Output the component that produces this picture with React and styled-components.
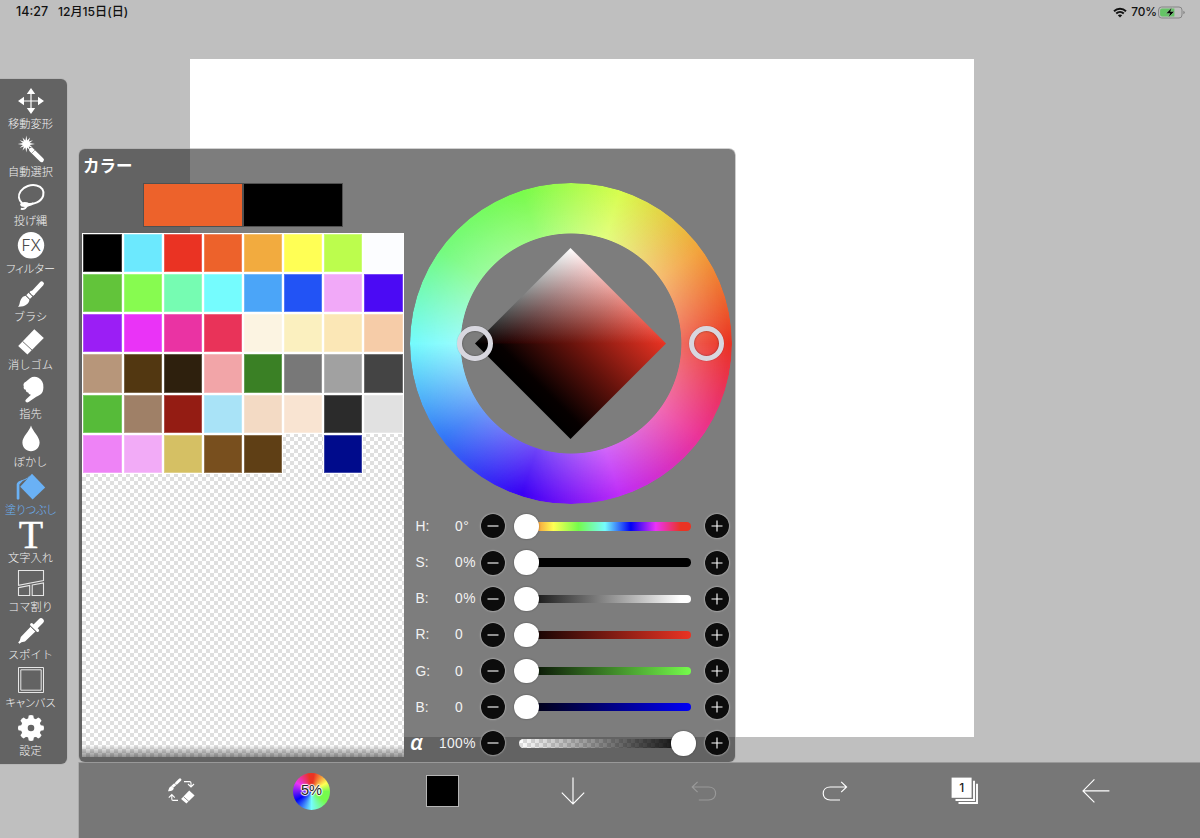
import React from 'react';
import styled, { createGlobalStyle, css } from 'styled-components';

const color = {
    workspace: '#bfbfbf',
    panel: 'rgba(34, 34, 34, 0.59)',
    bar: '#777777',
    label: '#f2f2f2',
    active: '#6ab1f5',
};

const swatches = [
    '#000000', '#6ce9fe', '#ea3323', '#ed622b', '#f2ab3f', '#ffff55', '#bcfd4d', '#fcfdff',
    '#62c43a', '#87fb50', '#76fcb2', '#75fcfe', '#4ba5f8', '#2253f5', '#f1a9f8', '#4b0af4',
    '#9b1ef5', '#ea33f7', '#ea33a3', '#e93359', '#fcf4e2', '#fbf0bf', '#fbe7b6', '#f6cca8',
    '#b7967a', '#523711', '#2e200d', '#f2a5a8', '#3a8025', '#787878', '#a1a1a1', '#444444',
    '#56bb39', '#9f8067', '#941c13', '#a9e3f7', '#f3dac4', '#f9e4d2', '#2b2b2b', '#e1e1e1',
    '#ee83f6', '#f2abf7', '#d5c064', '#784f1e', '#5f3f15', null, '#000b8c', null,
];

const hue = 'linear-gradient(90deg, #ea3323, #ffff54 20%, #75fb4c 34.5%, #75fbfd 50%, #0000f5 65%, #ea33f7 79.5%, #ea3323 94%)';

const sliders = [
    { name: 'H:', value: '0', unit: '°', track: hue },
    { name: 'S:', value: '0', unit: '%', track: '#000' },
    { name: 'B:', value: '0', unit: '%', track: 'linear-gradient(90deg, #000, #fff 94%)' },
    { name: 'R:', value: '0', unit: '', track: 'linear-gradient(90deg, #000, #ea3323)' },
    { name: 'G:', value: '0', unit: '', track: 'linear-gradient(90deg, #000, #75fb4c)' },
    { name: 'B:', value: '0', unit: '', track: 'linear-gradient(90deg, #000, #0000f5)' },
    {
        name: 'α',
        value: '100',
        unit: '%',
        full: true,
        track: 'linear-gradient(90deg, rgba(0,0,0,0), #000), repeating-conic-gradient(#dfdfdf 0 25%, #fff 0 50%) 0 0 / 8px 8px',
    },
];

const rays = Array.from({ length: 12 }, (_, i) => {
    const a = (i * Math.PI) / 6;
    const r = i % 3 === 0 ? 8.6 : 7.6;
    const b = a + Math.PI / 12;
    return `${9.3 + r * Math.cos(a)},${9 + r * Math.sin(a)} ${9.3 + 3.5 * Math.cos(b)},${9 + 3.5 * Math.sin(b)}`;
}).join(' ');

function MoveIcon() {
    return (
        <Icon>
            <path d="M14 6V22M6 14H22" stroke="currentColor" strokeWidth="1.2" />
            <path fill="currentColor" d="M14 1L18.2 7H9.8ZM14 27L18.2 21H9.8ZM1 14L7 9.8V18.2ZM27 14L21 9.8V18.2Z" />
        </Icon>
    );
}

function WandIcon() {
    return (
        <Icon>
            <polygon points={rays} fill="currentColor" />
            <path d="M14.4 14.9L24.6 24.8" stroke="currentColor" strokeWidth="4.6" strokeLinecap="round" />
            <path d="M14.6 18.4L18.4 14.6" stroke="#636363" strokeWidth="0.5" />
        </Icon>
    );
}

function LassoIcon() {
    return (
        <Icon>
            <path
                d="M5.2 20.2C1.6 17.2 .8 12.4 3.6 8.2C7 3.2 14 1.2 19.6 2.4C25 3.6 27.6 8 26.2 12.6C24.4 18.6 17 22 9.6 20.8"
                fill="none" stroke="currentColor" strokeWidth="2"
            />
            <ellipse cx="7.8" cy="21.4" rx="4.6" ry="2.5" fill="currentColor" />
            <path d="M10 22.4C14 22.2 15.6 21.4 16 19.6M9.8 22C9.8 25 7.4 26.2 3.8 25.8" fill="none" stroke="currentColor" strokeWidth="2" />
        </Icon>
    );
}

function FxIcon() {
    return (
        <Icon>
            <circle cx="14" cy="14.3" r="13.2" fill="currentColor" />
            <FxText x="14" y="20">FX</FxText>
        </Icon>
    );
}

function BrushIcon() {
    return (
        <Icon>
            <path d="M16 13L24.6 3.8" stroke="currentColor" strokeWidth="4.6" strokeLinecap="round" />
            <path fill="currentColor" d="M14.2 10.4L18 14.2L16.2 15.8L12.4 12.2ZM11.6 12.8L15.4 16.5L12.9 19L9.2 15.3Z" />
            <path fill="currentColor" d="M8.6 15.7L12.4 19.5C12.4 23.6 8 27 1 26.7C3.2 24.6 2.2 22.4 4 19.2C5 17.2 6.6 16 8.6 15.7Z" />
            <path d="M12 12.4L15.8 16.2M8.8 15.4L12.8 19.3" stroke="#636363" strokeWidth="0.7" />
        </Icon>
    );
}

function EraserIcon() {
    return (
        <Icon>
            <path fill="currentColor" d="M17.3 1.2L26.8 9.9L10.4 26.4L1.2 17.9Z" />
            <path d="M5.6 13.4L15 22.1" stroke="#636363" strokeWidth="0.9" />
        </Icon>
    );
}

function FingerIcon() {
    return (
        <Icon>
            <path
                fill="currentColor"
                d="M13 2.2C15.4 .6 18.6 .4 21.4 1.8C25 3.8 26.6 7.2 26.4 11.4C26.2 14.6 25.6 17 23.4 18.4C21 19.8 19.6 20.4 18.2 21.4L11.6 26C10.6 26.7 9.4 26.6 8.8 25.8C8.1 25 8.3 24 9.2 23.2L14 18.8C12.6 18.6 11.4 17.8 11.2 16.6C9.8 16.4 8.6 15.4 8.8 13.8C7.2 13.4 6.2 12 6.8 10.4C5.8 8.4 6.8 6.8 8.8 5.8Z"
            />
        </Icon>
    );
}

function DropIcon() {
    return (
        <Icon>
            <path fill="currentColor" d="M14 1.4C15.6 7.4 22.6 12.2 22.6 18.6C22.6 23.6 18.8 27.2 14 27.2C9.2 27.2 5.4 23.6 5.4 18.6C5.4 12.2 12.4 7.4 14 1.4Z" />
        </Icon>
    );
}

function BucketIcon() {
    return (
        <Icon>
            <path fill="currentColor" d="M15 .8L28.2 14.6L15.6 26.4L3.2 13.8Z" />
            <path fill="none" stroke="currentColor" strokeWidth="1" d="M12.6 3.2C10 6.8 6 6.6 2.4 9" />
            <path fill="currentColor" d="M-.3 11.6C-.2 9 2.4 7.8 6.6 7L2.4 11.4V25.6C2.4 27 -.3 27 -.3 25.6Z" />
        </Icon>
    );
}

function TypeIcon() {
    return (
        <Icon>
            <SerifText x="14" y="26.6">T</SerifText>
        </Icon>
    );
}

function FrameIcon() {
    return (
        <Icon>
            <path
                fill="none" stroke="#e6e6e6" strokeWidth="1.1"
                d="M1.5 1.5H26.5V11.6L1.5 16.4ZM1.5 18.6L12.7 16.5V26.5H1.5ZM15.2 16L26.5 13.9V26.5H15.2Z"
            />
        </Icon>
    );
}

function DropperIcon() {
    return (
        <Icon>
            <path d="M19 9L24 4" stroke="currentColor" strokeWidth="5.6" strokeLinecap="round" />
            <path d="M14.6 7.6L20.6 13.4" stroke="currentColor" strokeWidth="3" strokeLinecap="round" />
            <path fill="currentColor" d="M13.6 9.8L18.4 14.6L8 24.4L4.4 25.2L2.4 26.8L1.2 25.6L2.8 23.6L3.8 20Z" />
            <path d="M13.8 9.6L18.6 14.4" stroke="#636363" strokeWidth="0.7" />
        </Icon>
    );
}

function CanvasIcon() {
    return (
        <Icon>
            <path fill="none" stroke="#e6e6e6" d="M1.5 1.5H26.5V26.5H1.5ZM3.8 3.8H24.2V24.2H3.8Z" />
        </Icon>
    );
}

function GearIcon() {
    return (
        <Icon>
            {[0, 45, 90, 135, 180, 225, 270, 315].map((deg) => (
                <path key={deg} fill="currentColor" d="M11 5.6L11.7 1.4Q14 .5 16.3 1.4L17 5.6Z" transform={`rotate(${deg} 14 14)`} />
            ))}
            <circle cx="14" cy="14" r="6.7" fill="none" stroke="currentColor" strokeWidth="6.8" />
        </Icon>
    );
}

const tools = [
    ['移動変形', MoveIcon],
    ['自動選択', WandIcon],
    ['投げ縄', LassoIcon],
    ['フィルター', FxIcon],
    ['ブラシ', BrushIcon],
    ['消しゴム', EraserIcon],
    ['指先', FingerIcon],
    ['ぼかし', DropIcon],
    ['塗りつぶし', BucketIcon],
    ['文字入れ', TypeIcon],
    ['コマ割り', FrameIcon],
    ['スポイト', DropperIcon],
    ['キャンバス', CanvasIcon],
    ['設定', GearIcon],
];

function StatusBar() {
    return (
        <Status>
            <span>14:27</span>
            <StatusDate>12月15日(日)</StatusDate>
            <svg width="14" height="11" viewBox="0 0 14 11">
                <path d="M1 4.2C4.4 .9 9.6 .9 13 4.2M3.2 6.5C5.4 4.4 8.6 4.4 10.8 6.5" fill="none" stroke="#111" strokeWidth="1.9" />
                <path d="M7 10.4L4.8 8.2C6 7.1 8 7.1 9.2 8.2Z" fill="#111" />
            </svg>
            <Percent>70%</Percent>
            <svg width="27" height="13" viewBox="0 0 27 13">
                <rect x=".6" y="1" width="23.4" height="11" rx="3" fill="none" stroke="#858585" />
                <path d="M4 2.5H16.4V10.5H4Q2.1 10.5 2.1 8.5V4.5Q2.1 2.5 4 2.5Z" fill="#65c466" />
                <path d="M25.3 4.7Q26.8 5.2 26.8 6.5T25.3 8.3Z" fill="#858585" />
                <path d="M13.8 1.6L8 7.4H11.8L10.4 11.6L16.4 5.6H12.6Z" fill="#000" stroke="#bfe0bf" strokeWidth="0.4" />
            </svg>
        </Status>
    );
}

function ColorWheel() {
    return (
        <Wheel>
            <Ring />
            <svg width="191" height="191" viewBox="0 0 190 190">
                <defs>
                    <clipPath id="diamond">
                        <path d="M0 95L95 0L190 95L95 190Z" />
                    </clipPath>
                    <linearGradient id="shade" gradientUnits="userSpaceOnUse" x1="47.5" y1="142.5" x2="142.5" y2="47.5">
                        <stop offset="0" stopColor="#000" />
                        <stop offset="0.12" stopColor="#060000" />
                        <stop offset="0.5" stopColor="#67130c" />
                        <stop offset="1" stopColor="#ea3323" />
                    </linearGradient>
                    <linearGradient id="tint" gradientUnits="userSpaceOnUse" x1="47.5" y1="47.5" x2="142.5" y2="142.5">
                        <stop offset="0" stopColor="#000" />
                        <stop offset="0.16" stopColor="#200000" />
                        <stop offset="0.5" stopColor="#67130c" />
                        <stop offset="1" stopColor="#ea3323" />
                    </linearGradient>
                    <linearGradient id="light" x1="0" y1="1" x2="0" y2="0">
                        <stop offset="0" stopColor="#000" />
                        <stop offset="1" stopColor="#fff" />
                    </linearGradient>
                </defs>
                <g clipPath="url(#diamond)">
                    <rect y="0" width="190" height="190" fill="url(#shade)" />
                    <rect width="190" height="95" fill="url(#tint)" />
                    <Light width="190" height="95" fill="url(#light)" />
                </g>
            </svg>
            <Handle $x={64.7} />
            <Handle $x={296.2} />
        </Wheel>
    );
}

function Slider({ name, value, unit, track, full }) {
    return (
        <SliderRow>
            <Name $alpha={full}>{name}</Name>
            <Value>{value}</Value>
            <Unit>{unit}</Unit>
            <Round>
                <svg width="24" height="24"><path d="M6.5 12H17.5" stroke="#fff" strokeWidth="1.1" /></svg>
            </Round>
            <TrackBox $end={full}>
                <Track $fill={track}>
                    <Knob />
                </Track>
            </TrackBox>
            <Round>
                <svg width="24" height="24"><path d="M6.5 12H17.5M12 6.5V17.5" stroke="#fff" strokeWidth="1.1" /></svg>
            </Round>
        </SliderRow>
    );
}

function BottomBar() {
    return (
        <Bar>
            <Slot>
                <Icon>
                    <path d="M9.4 6.2L13 2.7" stroke="#fff" strokeWidth="2.8" strokeLinecap="round" />
                    <path d="M5.4 9.8L8.2 7.2" stroke="#fff" strokeWidth="2.8" />
                    <path fill="#fff" d="M4.6 9L6.8 11.2C6.4 13 4.4 14.4 1 14.2C2 12.6 1.8 9.8 4.6 9Z" />
                    <path fill="#fff" d="M22.2 13.6L27.6 18.4L19.4 26.6L14.1 22Z" />
                    <path d="M16.6 19.8L21.8 24.4" stroke={color.bar} strokeWidth="0.8" />
                    <path d="M17 4.6H22.6Q24 4.6 24 6V9.8M21 7L24 10L27 7M11 23.4H6.2Q4.8 23.4 4.8 22V18M1.8 20.6L4.8 17.6L7.8 20.6" fill="none" stroke="#fff" strokeWidth="1.1" />
                </Icon>
            </Slot>
            <Slot>
                <HueDisc>5%</HueDisc>
            </Slot>
            <Slot>
                <CurrentColor />
            </Slot>
            <Slot>
                <Icon><Line d="M14 .4V27M2.8 15.7L14 27L25.2 15.7" /></Icon>
            </Slot>
            <Slot $dim>
                <Icon><Line d="M7.6 4.8L2.2 10L7.6 15.2M2.2 10H18.5C23 10 25.6 12.8 25.6 16.4C25.6 20 23 23 18.5 23H8.8" /></Icon>
            </Slot>
            <Slot>
                <Icon><Line d="M20.2 4.8L25.6 10L20.2 15.2M25.6 10H9.3C4.8 10 2.2 12.8 2.2 16.4C2.2 20 4.8 23 9.3 23H19" /></Icon>
            </Slot>
            <Slot>
                <Icon>
                    <path d="M7.5 26H26V6.8" fill="none" stroke="#fff" strokeWidth="1.9" />
                    <path d="M4.5 23H23V3.8" fill="none" stroke="#fff" strokeWidth="1.9" />
                    <rect x=".6" y=".6" width="20" height="20.2" fill="#fff" />
                    <LayerCount x="10.8" y="14.8">1</LayerCount>
                </Icon>
            </Slot>
            <Slot>
                <Icon><Line d="M27.4 13.9H1M12.4 2.4L1 13.9L12.4 25.4" /></Icon>
            </Slot>
        </Bar>
    );
}

export default function App() {
    return (
        <>
            <GlobalStyle />
            <Screen>
                <Artboard />
                <Interface>
                    <StatusBar />
                    <Workspace>
                        <Sidebar>
                            {tools.map(([label, ToolIcon]) => (
                                <Tool key={label} $active={label === '塗りつぶし'} $tight={label.length > 4}>
                                    <ToolIcon />
                                    <span>{label}</span>
                                </Tool>
                            ))}
                        </Sidebar>
                        <Main>
                            <ColorPanel>
                                <PaletteSide>
                                    <Title>カラー</Title>
                                    <Pair>
                                        <Chip $color="#ed622b" />
                                        <Chip $color="#000" />
                                    </Pair>
                                    <Palette>
                                        {swatches.map((c, i) => <Swatch key={i} $color={c} />)}
                                    </Palette>
                                </PaletteSide>
                                <PickerSide>
                                    <ColorWheel />
                                    {sliders.map((s, i) => <Slider key={i} {...s} />)}
                                </PickerSide>
                            </ColorPanel>
                            <BottomBar />
                        </Main>
                    </Workspace>
                </Interface>
            </Screen>
        </>
    );
}

const GlobalStyle = createGlobalStyle`
    * {
        box-sizing: border-box;
    }

    body {
        margin: 0;
        overflow: hidden;
        font-family: 'Liberation Sans', 'Noto Sans CJK JP', sans-serif;
    }

    svg {
        display: block;
        flex: none;
        overflow: visible;
    }
`;

const Screen = styled.div`
    display: grid;
    width: 1200px;
    height: 838px;
    background: ${color.workspace};
    overflow: hidden;

    > * {
        grid-area: 1 / 1;
    }
`;

const Artboard = styled.div`
    width: 784px;
    height: 677.5px;
    margin: 59px 0 0 190px;
    background: #fff;
`;

const Interface = styled.div`
    display: flex;
    flex-direction: column;
    width: 1200px;
    height: 838px;
`;

const Status = styled.div`
    display: flex;
    align-items: center;
    height: 24px;
    padding: 0 14.6px 0 16px;
    font: 500 12.5px/24px Inter, 'Noto Sans CJK JP', sans-serif;
    color: #111;
`;

const StatusDate = styled.span`
    margin: 0 auto 0 10px;
    font-size: 12.1px;
`;

const Percent = styled.span`
    margin: 0 1.4px 0 4px;
    font-size: 11.8px;
`;

const Workspace = styled.div`
    display: flex;
    flex: 1;
    align-items: flex-start;
`;

const Sidebar = styled.div`
    width: 67px;
    height: 685px;
    margin-top: 54.5px;
    padding-top: 8px;
    background: #636363;
    border-radius: 0 6px 6px 0;
    box-shadow: 0 0 0 0.7px #b4b4b4;
`;

const Tool = styled.div`
    display: flex;
    flex-direction: column;
    align-items: center;
    width: 62px;
    height: 48.26px;
    color: ${({ $active }) => ($active ? color.active : '#fff')};

    span {
        font: 300 11.2px/14px 'Noto Sans CJK JP', sans-serif;
        font-feature-settings: ${({ $tight }) => ($tight ? "'palt'" : 'normal')};
        margin: 1.6px 1px 0 0;
        white-space: nowrap;
        color: ${({ $active }) => ($active ? color.active : color.label)};
    }
`;

const Icon = styled.svg.attrs({ width: 28, height: 28, viewBox: '0 0 28 28' })``;

const FxText = styled.text`
    font: 300 15.8px Inter, sans-serif;
    letter-spacing: -0.4px;
    text-anchor: middle;
    fill: #4c4c4c;
`;

const SerifText = styled.text`
    font: 40px 'Liberation Serif', serif;
    text-anchor: middle;
    fill: currentColor;
    stroke: currentColor;
    stroke-width: 0.4px;
`;

const LayerCount = styled.text`
    font: 500 12px Inter, sans-serif;
    text-anchor: middle;
    fill: #222;
`;

const Line = styled.path`
    fill: none;
    stroke: #fff;
    stroke-width: 1.15px;
`;

const Main = styled.div`
    flex: 1;
    padding: 125px 0 0 11.5px;
`;

const ColorPanel = styled.div`
    display: flex;
    width: 656.8px;
    height: 613px;
    background: ${color.panel};
    border-radius: 6px;
    box-shadow: 0 0 0 0.8px rgba(165, 165, 165, 0.7);
`;

const PaletteSide = styled.div`
    width: 331.5px;
    padding-left: 3.5px;
`;

const Title = styled.div`
    height: 34px;
    padding-left: 1px;
    font: 700 16.5px/32px 'Noto Sans CJK JP', sans-serif;
    color: #fff;
`;

const Pair = styled.div`
    display: flex;
    width: 200.6px;
    height: 44px;
    margin-left: 60.5px;
    background: #505050;
    padding: 1px;
    gap: 1.4px;
`;

const Chip = styled.div`
    flex: 1;
    background: ${({ $color }) => $color};
`;

const Palette = styled.div`
    display: grid;
    grid-template-columns: repeat(8, 40.17px);
    grid-auto-rows: 40.17px;
    align-content: start;
    width: 322px;
    height: 524px;
    margin-top: 6px;
    padding-left: 0.4px;
    background:
        linear-gradient(rgba(0, 0, 0, 0), rgba(0, 0, 0, 0.42)) bottom / 100% 12px no-repeat,
        repeating-conic-gradient(#dfdfdf 0 25%, #fff 0 50%) 0 0 / 8px 8px;
`;

const Swatch = styled.div`
    ${({ $color }) => $color && css`
        border: 1px solid #fff;
        background: ${$color};
        box-shadow: inset 0 0 0 0.9px rgba(255, 255, 255, 0.25);
    `}
`;

const PickerSide = styled.div`
    width: 322px;
    padding-top: 33.7px;
`;

const Wheel = styled.div`
    position: relative;
    display: grid;
    place-items: center;
    width: 321.5px;
    height: 321.5px;
    margin-bottom: 4.2px;

    > svg {
        grid-area: 1 / 1;
        isolation: isolate;
    }
`;

const Ring = styled.div`
    grid-area: 1 / 1;
    width: 100%;
    height: 100%;
    border-radius: 50%;
    background:
        radial-gradient(closest-side, rgba(255, 255, 255, 0.28) 68%, rgba(255, 255, 255, 0) 98%),
        conic-gradient(
            from 90deg,
            #ea3323, #eb3397, #bf2df7, #3a00f5, #3478f6,
            #75fbfd, #75fb7e, #79fb4d, #d8fd50, #f2a33c, #ea3323
        );
    mask: radial-gradient(closest-side, transparent 68.3%, #000 68.8%);
`;

const Light = styled.rect`
    mix-blend-mode: plus-lighter;
`;

const Handle = styled.div`
    position: absolute;
    left: ${({ $x }) => $x - 17.5}px;
    top: 143.4px;
    width: 35.4px;
    height: 35.4px;
    border: 5.6px solid #d8d7df;
    border-radius: 50%;
    box-shadow: inset 0 0 2px rgba(0, 0, 0, 0.5), 0 0 1px rgba(0, 0, 0, 0.35);
`;

const SliderRow = styled.div`
    display: flex;
    align-items: center;
    height: 36.17px;
    font-size: 13.8px;
    color: ${color.label};
`;

const Name = styled.span`
    width: 23px;
    padding-left: 5.5px;
    ${({ $alpha }) => $alpha && css`
        padding: 0 0 4px;
        font: italic 600 22px/24px 'Open Sans', sans-serif;
        color: #fff;
    `}
`;

const Value = styled.span`
    width: 30.2px;
    text-align: right;
    letter-spacing: 0.4px;
`;

const Unit = styled.span`
    width: 17.4px;
`;

const Round = styled.div`
    flex: none;
    width: 24px;
    height: 24px;
    border-radius: 50%;
    background: #0c0c0c;
    box-shadow: 0 0 1.5px 0.6px rgba(200, 200, 200, 0.75);
`;

const TrackBox = styled.div`
    width: 200.8px;
    padding: 0 14px 0 14.3px;
    display: flex;

    > div {
        justify-content: ${({ $end }) => ($end ? 'flex-end' : 'flex-start')};
    }
`;

const Track = styled.div`
    display: flex;
    align-items: center;
    flex: 1;
    height: 8.4px;
    border-radius: 4.2px;
    background: ${({ $fill }) => $fill};
`;

const Knob = styled.div`
    flex: none;
    width: 24.4px;
    height: 24.4px;
    margin: 0 -4.4px;
    border-radius: 50%;
    background: #fff;
    box-shadow: 0 0 2px rgba(0, 0, 0, 0.4);
`;

const Bar = styled.div`
    display: flex;
    height: 77px;
    padding-left: 36.8px;
    background: ${color.bar};
    border-top: 1px solid #999;
    box-shadow: -1px 0 0 #aaa;
`;

const Slot = styled.div`
    display: flex;
    justify-content: center;
    align-items: center;
    width: 130.8px;
    height: 56px;
    opacity: ${({ $dim }) => ($dim ? 0.25 : 1)};
`;

const HueDisc = styled.div`
    width: 37px;
    height: 37px;
    border-radius: 50%;
    text-align: center;
    font: 14.6px/35px 'Liberation Sans', sans-serif;
    color: #222;
    text-shadow: 0 0 1px #fff, 1px 0 1px #fff, -1px 0 1px #fff, 0 1px 1px #fff, 0 -1px 1px #fff;
    background: conic-gradient(#ea3323 8deg, #ffff54 60deg, #75fb4c 90deg, #75fb4c 125deg, #75fbfd 180deg, #0000f5 240deg, #ea33f7 300deg, #ea3323 352deg);
`;

const CurrentColor = styled.div`
    width: 32.5px;
    height: 32.5px;
    border: 1px solid #b5b5b5;
    background: #000;
`;
